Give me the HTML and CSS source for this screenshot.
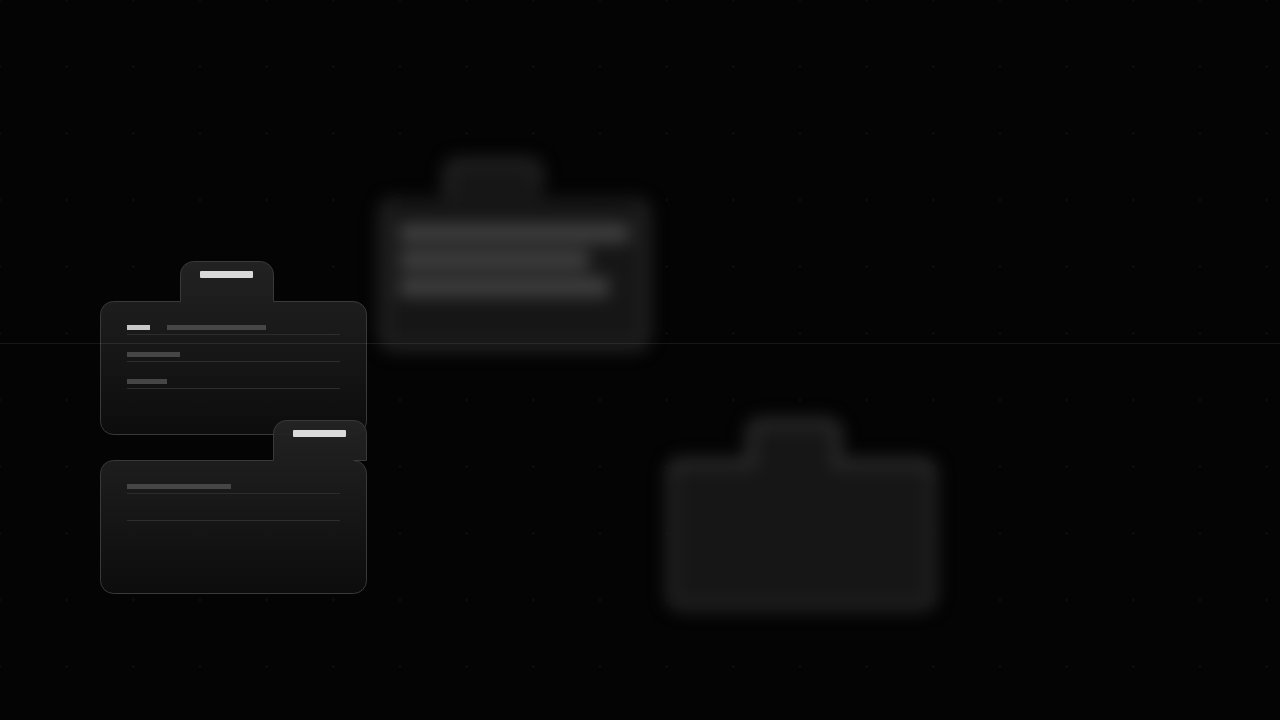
FILE: index.html
```
<!DOCTYPE html>
<html lang="en">
<head>
  <meta charset="UTF-8">
  <title>Folders</title>
  <meta name="viewport" content="width=device-width, initial-scale=1">
  <link rel="stylesheet" href="styles.css">
</head>
<body>
  <main class="canvas">
    <svg class="dots" viewBox="0 0 1920 1080" preserveAspectRatio="xMinYMin slice" aria-hidden="true">
      <defs>
        <pattern id="dot" x="-50" y="-50" width="100" height="100" patternUnits="userSpaceOnUse">
          <circle cx="50" cy="50" r="1.5"/>
        </pattern>
      </defs>
      <rect width="1920" height="1080" fill="url(#dot)"/>
    </svg>

    <!-- out of focus -->
    <div class="folder blurred lines">
      <svg class="shape" viewBox="0 0 275 197" aria-hidden="true">
        <path class="soft" d="M20 41H65V19Q65 1 83 1H149Q167 1 167 19V41H254Q274 41 274 61V176Q274 196 254 196H21Q1 196 1 176V61Q1 41 21 41Z"/>
        <path class="rim" d="M71 40V20Q71 7 84 7H148Q161 7 161 20V28M17 47Q7 47 7 59V178Q7 190 19 190H256Q268 190 268 178V59Q268 47 258 47"/>
      </svg>
      <div class="smudges">
        <span class="smudge long"></span>
        <span class="smudge short"></span>
        <span class="smudge medium"></span>
      </div>
    </div>
    <div class="folder blurred empty">
      <svg class="shape" viewBox="0 0 275 197" aria-hidden="true">
        <path class="soft" d="M21 41H81V19Q81 1 99 1H161Q179 1 179 19V41H254Q274 41 274 61V176Q274 196 254 196H21Q1 196 1 176V61Q1 41 21 41Z"/>
        <path class="rim sides" d="M7 59V178Q7 190 19 190H256Q268 190 268 178V59"/>
        <path class="rim bright" d="M7 59Q7 47 19 47H87V20Q87 7 100 7H160Q173 7 173 20V47H256Q268 47 268 59"/>
      </svg>
    </div>

    <!-- in focus -->
    <div class="folder sharp first">
      <svg class="shape" viewBox="0 0 267 174" aria-hidden="true">
        <defs>
          <linearGradient id="paper" x1="0" y1="0" x2="0" y2="1">
            <stop offset="0" stop-color="#242424"/>
            <stop offset="1" stop-color="#0d0d0d"/>
          </linearGradient>
        </defs>
        <path class="paper" d="M13.5 40.5H80.5V13.5A13 13 0 0 1 93.5 .5H160.5A13 13 0 0 1 173.5 13.5V40.5H253.5A13 13 0 0 1 266.5 53.5V160.5A13 13 0 0 1 253.5 173.5H13.5A13 13 0 0 1 .5 160.5V53.5A13 13 0 0 1 13.5 40.5Z"/>
      </svg>
      <div class="tab"><span class="label"></span></div>
      <div class="rows">
        <div class="row"><span class="bar key"></span><span class="bar w-99"></span></div>
        <div class="row"><span class="bar w-53"></span></div>
        <div class="row"><span class="bar w-40"></span></div>
      </div>
    </div>
    <div class="folder sharp second">
      <svg class="shape" viewBox="0 0 267 174" aria-hidden="true">
        <path class="paper" d="M13.5 40.5H173.5V13.5A13 13 0 0 1 186.5 .5H253.5A13 13 0 0 1 266.5 13.5V40.5H253.5A13 13 0 0 1 266.5 53.5V160.5A13 13 0 0 1 253.5 173.5H13.5A13 13 0 0 1 .5 160.5V53.5A13 13 0 0 1 13.5 40.5Z"/>
      </svg>
      <div class="tab"><span class="label"></span></div>
      <div class="rows">
        <div class="row"><span class="bar w-104"></span></div>
        <div class="row"></div>
      </div>
    </div>

    <div class="horizon"></div>
  </main>
</body>
</html>
```
FILE: styles.css
```
* {
  box-sizing: border-box;
}
body {
  margin: 0;
  background: #040404;
  font-family: "Liberation Sans", Arial, sans-serif;
}
.canvas {
  position: relative;
  min-height: 100vh;
  overflow: hidden;
}
.dots {
  position: absolute;
  top: 0;
  left: 0;
  width: 100%;
  height: 100%;
}
.dots circle {
  fill: #141414;
}

.folder {
  position: absolute;
}
.shape {
  position: absolute;
  top: 0;
  left: 0;
  width: 100%;
  height: 100%;
  z-index: -1;
}

/* sharp folders */
.sharp {
  width: 267px;
  height: 174px;
  isolation: isolate;
}
.first {
  left: 100px;
  top: 261px;
}
.second {
  left: 100px;
  top: 420px;
}
.paper {
  fill: url(#paper);
  fill-opacity: .94;
  stroke: #393939;
}
.tab {
  display: flex;
  justify-content: center;
  width: 93px;
  height: 41px;
  margin-left: 80px;
  padding-top: 10px;
}
.second .tab {
  margin-left: 173px;
}
.label {
  width: 53px;
  height: 7px;
  border-radius: 1px;
  background: #dadada;
}
.rows {
  padding: 6px 27px 0;
}
.row {
  display: flex;
  align-items: flex-end;
  gap: 17px;
  height: 27px;
  padding-bottom: 4px;
  border-bottom: 1px solid #2d2d2d;
}
.bar {
  height: 5px;
  background: #464646;
}
.key {
  width: 23px;
  background: #c8c8c8;
}
.w-40 {
  width: 40px;
}
.w-53 {
  width: 53px;
}
.w-99 {
  width: 99px;
}
.w-104 {
  width: 104px;
}

/* blurred folders */
.blurred {
  width: 275px;
  height: 197px;
  filter: blur(8px);
}
.lines {
  left: 377px;
  top: 156px;
}
.empty {
  left: 664px;
  top: 416px;
}
.soft {
  fill: #161616;
}
.rim {
  fill: none;
  stroke: #212121;
  stroke-width: 10;
}
.rim.bright {
  stroke: #2a2a2a;
}
.smudges {
  display: flex;
  flex-direction: column;
  gap: 7px;
  padding: 67px 22px 0;
}
.smudge {
  height: 20px;
  border-radius: 4px;
  background: #3e3e3e;
}
.long {
  width: 230px;
}
.medium {
  width: 210px;
}
.short {
  width: 190px;
}

.horizon {
  position: absolute;
  top: 343px;
  left: 0;
  right: 0;
  height: 1px;
  background: rgba(255, 255, 255, .08);
}
```
